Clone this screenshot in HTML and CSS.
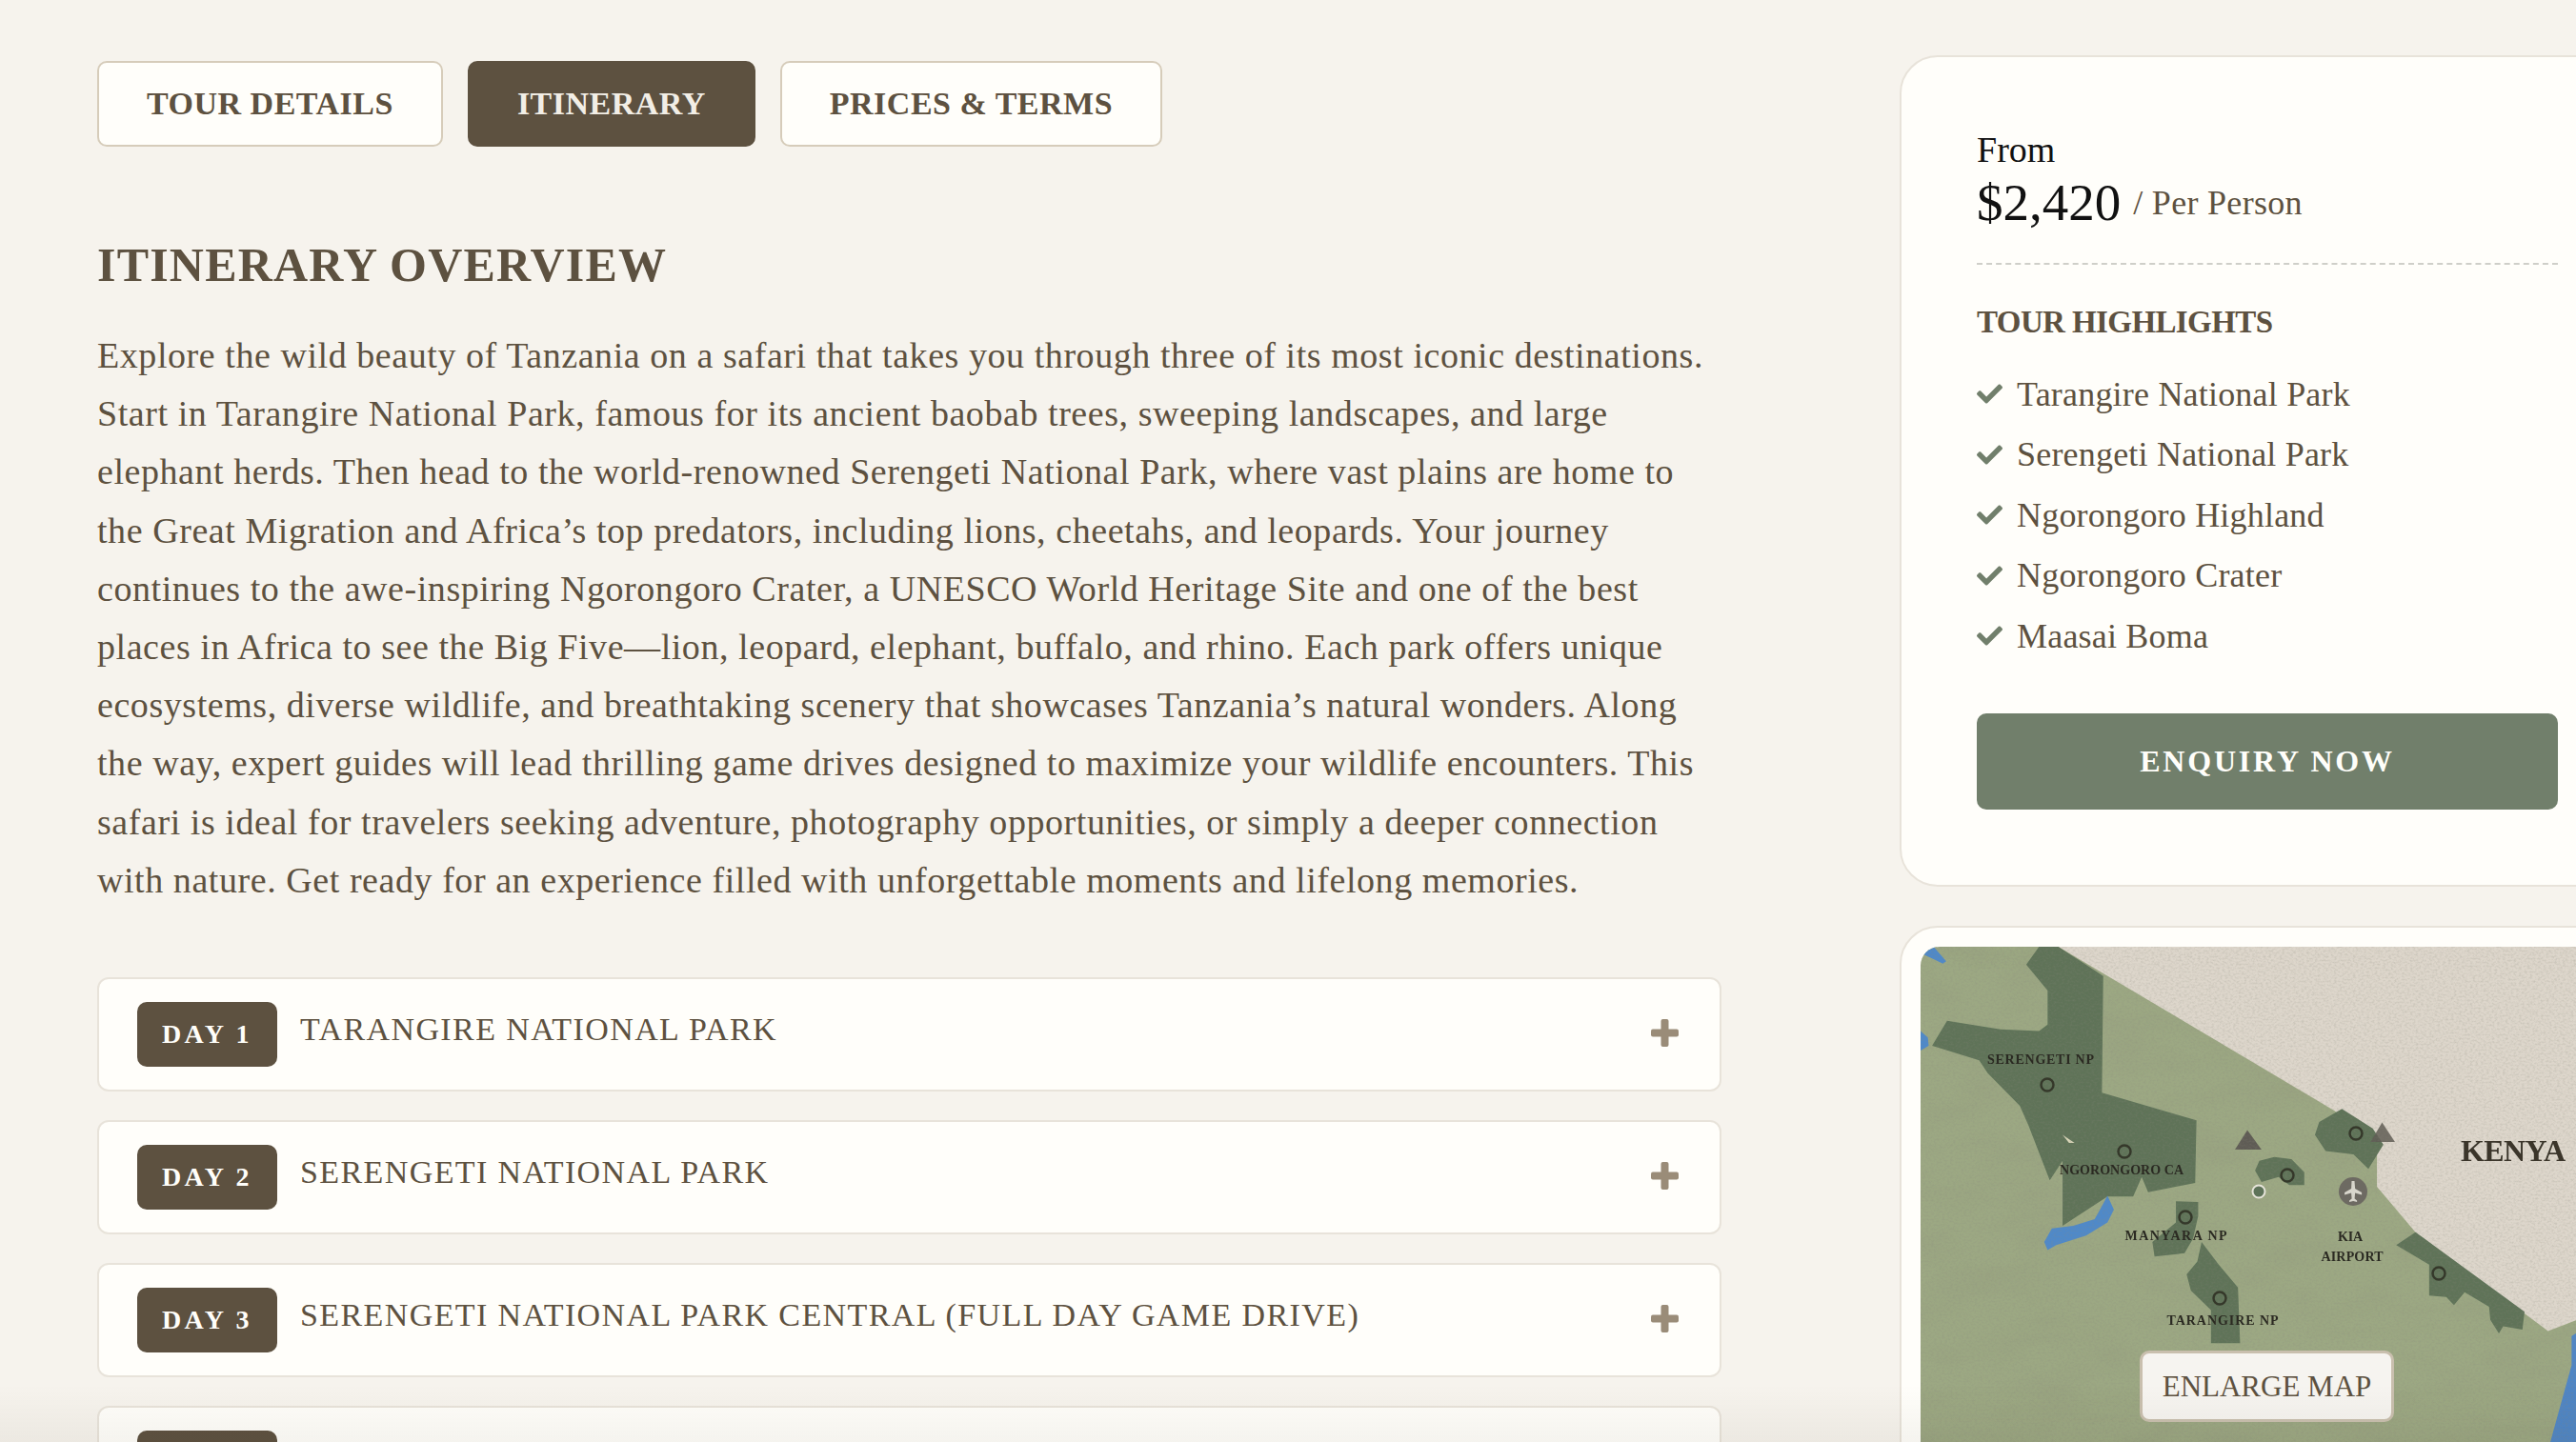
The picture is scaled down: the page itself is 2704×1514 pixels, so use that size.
FILE: index.html
```html
<!DOCTYPE html>
<html>
<head>
  <title>Tanzania Safari - Itinerary</title>
  <link rel="stylesheet" href="styles.css">
</head>
<body>
  <div class="page">
    <main class="content">
      <nav class="tabs">
        <a class="tab">TOUR DETAILS</a>
        <a class="tab active">ITINERARY</a>
        <a class="tab">PRICES &amp; TERMS</a>
      </nav>

      <h2 class="overview-title">ITINERARY OVERVIEW</h2>
      <p class="overview">Explore the wild beauty of Tanzania on a safari that takes you through three of its most iconic destinations.<br>Start in Tarangire National Park, famous for its ancient baobab trees, sweeping landscapes, and large<br>elephant herds. Then head to the world-renowned Serengeti National Park, where vast plains are home to<br>the Great Migration and Africa’s top predators, including lions, cheetahs, and leopards. Your journey<br>continues to the awe-inspiring Ngorongoro Crater, a UNESCO World Heritage Site and one of the best<br>places in Africa to see the Big Five—lion, leopard, elephant, buffalo, and rhino. Each park offers unique<br>ecosystems, diverse wildlife, and breathtaking scenery that showcases Tanzania’s natural wonders. Along<br>the way, expert guides will lead thrilling game drives designed to maximize your wildlife encounters. This<br>safari is ideal for travelers seeking adventure, photography opportunities, or simply a deeper connection<br>with nature. Get ready for an experience filled with unforgettable moments and lifelong memories.</p>

      <div class="days">
        <div class="day">
          <span class="day-badge">DAY 1</span>
          <span class="day-title">TARANGIRE NATIONAL PARK</span>
          <svg class="day-plus" viewBox="0 0 29 29"><rect x="10.5" width="8" height="29" rx="2"/><rect y="10.5" width="29" height="8" rx="2"/></svg>
        </div>
        <div class="day">
          <span class="day-badge">DAY 2</span>
          <span class="day-title">SERENGETI NATIONAL PARK</span>
          <svg class="day-plus" viewBox="0 0 29 29"><rect x="10.5" width="8" height="29" rx="2"/><rect y="10.5" width="29" height="8" rx="2"/></svg>
        </div>
        <div class="day">
          <span class="day-badge">DAY 3</span>
          <span class="day-title">SERENGETI NATIONAL PARK CENTRAL (FULL DAY GAME DRIVE)</span>
          <svg class="day-plus" viewBox="0 0 29 29"><rect x="10.5" width="8" height="29" rx="2"/><rect y="10.5" width="29" height="8" rx="2"/></svg>
        </div>
        <div class="day">
          <span class="day-badge"></span>
        </div>
      </div>
    </main>

    <aside class="side">
      <section class="card price-card">
        <div class="from">From</div>
        <div class="price"><span class="amount">$2,420</span><span class="per">/ Per Person</span></div>
        <h3 class="highlights-title">TOUR HIGHLIGHTS</h3>
        <ul class="highlights">
          <li><svg class="check" viewBox="0 0 512 512"><path d="M173.9 439.4l-166.4-166.4c-10-10-10-26.2 0-36.2l36.2-36.2c10-10 26.2-10 36.2 0L192 312.7 432.1 72.6c10-10 26.2-10 36.2 0l36.2 36.2c10 10 10 26.2 0 36.2l-294.4 294.4c-10 10-26.2 10-36.2 0z"/></svg>Tarangire National Park</li>
          <li><svg class="check" viewBox="0 0 512 512"><path d="M173.9 439.4l-166.4-166.4c-10-10-10-26.2 0-36.2l36.2-36.2c10-10 26.2-10 36.2 0L192 312.7 432.1 72.6c10-10 26.2-10 36.2 0l36.2 36.2c10 10 10 26.2 0 36.2l-294.4 294.4c-10 10-26.2 10-36.2 0z"/></svg>Serengeti National Park</li>
          <li><svg class="check" viewBox="0 0 512 512"><path d="M173.9 439.4l-166.4-166.4c-10-10-10-26.2 0-36.2l36.2-36.2c10-10 26.2-10 36.2 0L192 312.7 432.1 72.6c10-10 26.2-10 36.2 0l36.2 36.2c10 10 10 26.2 0 36.2l-294.4 294.4c-10 10-26.2 10-36.2 0z"/></svg>Ngorongoro Highland</li>
          <li><svg class="check" viewBox="0 0 512 512"><path d="M173.9 439.4l-166.4-166.4c-10-10-10-26.2 0-36.2l36.2-36.2c10-10 26.2-10 36.2 0L192 312.7 432.1 72.6c10-10 26.2-10 36.2 0l36.2 36.2c10 10 10 26.2 0 36.2l-294.4 294.4c-10 10-26.2 10-36.2 0z"/></svg>Ngorongoro Crater</li>
          <li><svg class="check" viewBox="0 0 512 512"><path d="M173.9 439.4l-166.4-166.4c-10-10-10-26.2 0-36.2l36.2-36.2c10-10 26.2-10 36.2 0L192 312.7 432.1 72.6c10-10 26.2-10 36.2 0l36.2 36.2c10 10 10 26.2 0 36.2l-294.4 294.4c-10 10-26.2 10-36.2 0z"/></svg>Maasai Boma</li>
        </ul>
        <a class="enquiry">ENQUIRY NOW</a>
      </section>

      <section class="card map-card">
        <div class="map">
          <svg class="map-art" viewBox="0 0 728 540">
            <defs>
              <filter id="soft"><feGaussianBlur stdDeviation="1"/></filter>
              <filter id="softer"><feGaussianBlur stdDeviation="0.7"/></filter>
              <filter id="grain" x="0" y="0" width="100%" height="100%">
                <feTurbulence type="fractalNoise" baseFrequency="0.012 0.03" numOctaves="4" seed="7"/>
                <feColorMatrix values="0 0 0 0 0.25  0 0 0 0 0.25  0 0 0 0 0.18  0 0 0 1.3 -0.55"/>
              </filter>
              <filter id="weave" x="0" y="0" width="100%" height="100%">
                <feTurbulence type="fractalNoise" baseFrequency="0.35 0.5" numOctaves="2" seed="3"/>
                <feColorMatrix values="0 0 0 0 0.25  0 0 0 0 0.25  0 0 0 0 0.2  0 0 0 1.6 -0.65"/>
              </filter>
            </defs>
            <rect width="728" height="540" fill="#9ca883"/>
            <rect width="728" height="540" filter="url(#grain)" opacity="0.22"/>
            <g transform="scale(0.449 0.3406) translate(-33 -40)">
              <g filter="url(#soft)">
                <polygon fill="#ddd6cb" points="355,40 1000,545 1100,640 1100,780 1190,920 1500,1225 1568,1190 1800,1190 1800,40"/>
                <polygon fill="#4f86c6" points="1568,1230 1555,1240 1555,1330 1505,1568 1505,1800 1800,1800 1800,1230"/>
                <g fill="#5e7359">
                  <polygon points="310,40 355,40 460,130 457,490 678,575 675,768 565,797 550,750 530,810 470,810 365,900 365,700 335,760 285,590 265,530 190,430 170,390 60,345 95,268 220,295 310,300 330,280 330,175 280,95"/>
                  <polygon points="630,825 682,827 682,870 670,940 650,985 580,995 575,950 630,890"/>
                  <polygon points="690,950 730,1020 775,1090 780,1262 712,1262 712,1160 665,1100 655,1050 680,1010"/>
                  <polygon points="1018,540 1090,600 1115,650 1080,725 1045,680 980,670 955,620 965,580"/>
                  <polygon points="815,730 825,700 860,688 900,695 930,735 930,775 895,775 870,750 830,765"/>
                  <polygon points="1190,920 1445,1165 1440,1220 1395,1210 1385,1232 1365,1190 1362,1150 1305,1105 1280,1145 1262,1120 1222,1115 1222,1020 1145,960"/>
                </g>
                <g fill="#4f89c9">
                  <polygon points="440,880 470,808 485,850 470,890 420,930 350,960 330,975 322,950 340,908 390,900"/>
                  <polygon points="33,60 65,42 93,85 85,92 50,70"/>
                  <polygon points="33,300 50,320 52,345 33,360"/>
                </g>
                <polygon fill="#d9d5b8" points="365,620 393,645 380,645"/>
                <g fill="#5f5c54">
                  <polygon points="797,605 830,665 768,665"/>
                  <polygon points="1112,582 1142,642 1085,642" opacity="0.85"/>
                </g>
              </g>
            </g>
            <rect width="728" height="540" filter="url(#weave)" opacity="0.3"/>
            <g class="map-rings" filter="url(#softer)">
              <circle cx="133" cy="145" r="6.5"/>
              <circle cx="214" cy="215" r="6.5"/>
              <circle cx="385" cy="240" r="6.5"/>
              <circle cx="457" cy="196" r="6.5"/>
              <circle cx="278" cy="284" r="6.5"/>
              <circle cx="314" cy="369" r="6.5"/>
              <circle cx="544" cy="343" r="6.5"/>
            </g>
            <circle cx="355" cy="257" r="6.5" fill="#5e7359" stroke="#e6e4da" stroke-width="2"/>
            <circle cx="454" cy="257" r="15" fill="#6d6a62"/>
            <path d="M452.500 246h3l.6 8 7 4v2.500l-7-2-.5 6 2.500 2v1.500l-4-1-4 1v-1.500l2.500-2-.5-6-7 2v-2.500l7-4z" fill="#d8d6cc"/>
            <g class="map-labels" filter="url(#softer)">
              <text x="126" y="123" textLength="112">SERENGETI NP</text>
              <text x="211" y="239" textLength="130">NGORONGORO CA</text>
              <text x="268" y="308" textLength="107">MANYARA NP</text>
              <text x="451" y="309" textLength="26">KIA</text>
              <text x="453" y="330" textLength="65">AIRPORT</text>
              <text x="317" y="397" textLength="117">TARANGIRE NP</text>
              <text class="map-country" x="622" y="225" textLength="110">KENYA</text>
            </g>
          </svg>
          <a class="enlarge">ENLARGE MAP</a>
        </div>
      </section>
    </aside>
  </div>
  <div class="bottom-fade"></div>
</body>
</html>
```

FILE: styles.css
```css
html, body {
  margin: 0;
  height: 1514px;
  overflow: hidden;
}
body {
  background: #f6f3ed;
  color: #5d5140;
  font-family: "Liberation Serif", serif;
}
.page {
  display: flex;
  align-items: flex-start;
  gap: 187px;
  height: 1514px;
  overflow: hidden;
  padding: 58px 0 0 102px;
  width: 2766px;
  box-sizing: border-box;
}

/* left column */
.content {
  width: 1705px;
  flex-shrink: 0;
  padding-top: 6px;
}
.tabs {
  display: flex;
  gap: 26px;
}
.tab {
  display: flex;
  align-items: center;
  height: 90px;
  box-sizing: border-box;
  padding: 0 50px;
  background: #fffefa;
  border: 2px solid #d6ccba;
  border-radius: 10px;
  font-size: 34px;
  font-weight: bold;
  letter-spacing: 0.5px;
  color: #5d5140;
}
.tab.active {
  background: #5d5140;
  border-color: #5d5140;
  color: #f2eee6;
}
.overview-title {
  margin: 96px 0 0;
  font-size: 50px;
  line-height: 56px;
  font-weight: bold;
  letter-spacing: 1.2px;
  color: #5d5140;
}
.overview {
  margin: 37px 0 0;
  font-size: 38px;
  line-height: 61.2px;
  letter-spacing: 0.56px;
  white-space: nowrap;
  color: #5d5140;
}
.days {
  display: flex;
  flex-direction: column;
  gap: 30px;
  margin-top: 71px;
}
.day {
  display: flex;
  align-items: flex-start;
  box-sizing: border-box;
  height: 120px;
  flex-shrink: 0;
  padding: 24px 40px;
  background: #fffefa;
  border: 2px solid #e8e3da;
  border-radius: 12px;
}
.day-badge {
  flex-shrink: 0;
  width: 147px;
  height: 68px;
  line-height: 68px;
  text-align: center;
  background: #5d5140;
  border-radius: 10px;
  color: #fffefa;
  font-size: 28px;
  font-weight: bold;
  letter-spacing: 3.4px;
}
.day-title {
  margin-left: 24px;
  font-size: 34px;
  line-height: 58px;
  letter-spacing: 1.4px;
  white-space: nowrap;
}
.day-plus {
  width: 29px;
  height: 29px;
  margin: 18px 3px 0 auto;
  fill: #9a8c78;
}

/* right column */
.side {
  width: 772px;
  flex-shrink: 0;
}
.card {
  box-sizing: border-box;
  background: #fffefa;
  border: 2px solid #e8e3da;
  border-radius: 40px;
}
.price-card {
  height: 873px;
  padding: 74px 79px 0;
}
.from {
  font-size: 38px;
  line-height: 46px;
  color: #111;
}
.price {
  display: flex;
  align-items: center;
  gap: 13px;
  margin-top: 0;
  padding-bottom: 30px;
  border-bottom: 2px dashed #cfcfc9;
  line-height: 66px;
}
.amount {
  font-size: 55px;
  color: #111;
}
.per {
  font-size: 36px;
  letter-spacing: 0.3px;
  color: #5d5140;
}
.highlights-title {
  margin: 40px 0 0;
  font-size: 33px;
  line-height: 40px;
  font-weight: bold;
  letter-spacing: -0.6px;
}
.highlights {
  list-style: none;
  margin: 24px 0 0;
  padding: 0;
}
.highlights li {
  display: flex;
  align-items: center;
  gap: 15px;
  height: 63.500px;
  font-size: 36px;
  letter-spacing: 0.2px;
}
.check {
  width: 27px;
  height: 27px;
  fill: #717f6b;
}
.enquiry {
  display: block;
  height: 101px;
  margin-top: 49px;
  background: #717f6b;
  border-radius: 10px;
  color: #fffefa;
  text-align: center;
  font-size: 32px;
  font-weight: bold;
  line-height: 101px;
  letter-spacing: 2.8px;
}
.map-card {
  margin-top: 41px;
  height: 600px;
  padding: 20px;
}
.map {
  position: relative;
  height: 540px;
  border-radius: 20px 20px 0 0;
  overflow: hidden;
}
.map-art {
  display: block;
  width: 728px;
  height: 540px;
}
.map-rings circle {
  fill: none;
  stroke: #35392c;
  stroke-width: 2.5;
}
.map-labels text {
  font-family: "Liberation Serif", serif;
  font-size: 14px;
  font-weight: bold;
  fill: #2b2a22;
  text-anchor: middle;
}
.map-labels .map-country {
  font-size: 32px;
  fill: #3a362c;
}
.enlarge {
  position: absolute;
  left: 230px;
  top: 424px;
  box-sizing: border-box;
  width: 267px;
  height: 75px;
  line-height: 69px;
  text-align: center;
  background: #f6f4f0;
  border: 3px solid #c9bfae;
  border-radius: 10px;
  font-size: 31px;
  color: #5d5140;
}

/* faint shade along the bottom edge of the window */
.bottom-fade {
  position: fixed;
  left: 0;
  right: 0;
  bottom: 0;
  height: 60px;
  background: linear-gradient(rgba(60, 50, 30, 0), rgba(60, 50, 30, 0.05));
}
```
